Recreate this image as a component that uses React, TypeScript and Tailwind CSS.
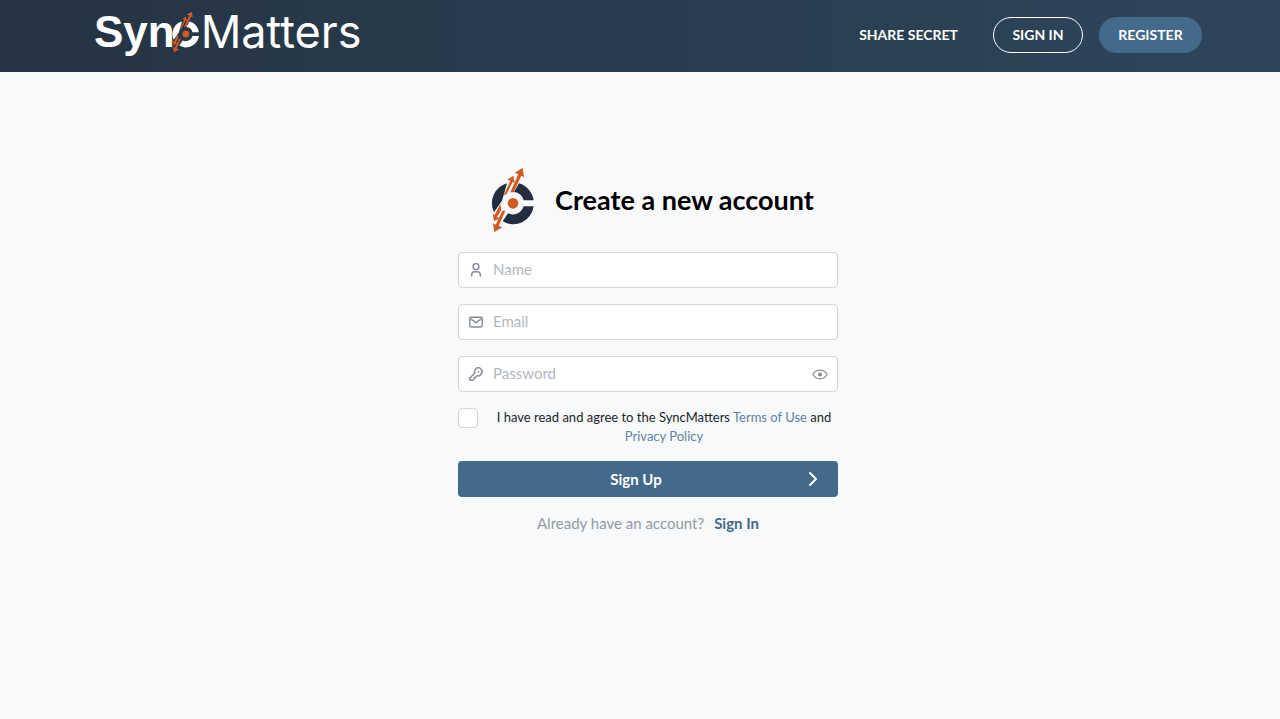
import { useState } from "react"
import type { FormEvent, ReactNode } from "react"

interface MarkProps {
  className: string
  ringColor: string
}

function Mark({ className, ringColor }: MarkProps) {
  return (
    <svg className={className} viewBox="30 21 135 198" aria-hidden="true">
      <g fill={ringColor}>
        <path d="M161 121 A62 62 0 0 0 117 70 L102 96 A34 34 0 0 1 131 121 Z" />
        <path d="M161 139 A62 62 0 0 1 68 184 L84 160 A34 34 0 0 0 131 139 Z" />
        <path d="M81 70 A62 62 0 0 0 42 157 L66 122 Z" />
      </g>
      <circle cx="99" cy="130" r="16" fill="#cf5b22" />
      <g fill="#cf5b22">
        <path d="M128 24 L132 52 L124 47 L101 97 L91 97 L115 42 L104 38 Z" />
        <path d="M100 47 L104 69 L98 66 L80 101 L70 108 L91 62 L82 59 Z" />
        <path d="M43 216 L39 190 L47 194 L67 152 L76 152 L56 198 L67 202 Z" />
        <path d="M42 183 L38 161 L44 165 L61 132 L64 150 L51 171 L60 175 Z" />
      </g>
    </svg>
  )
}

function UserIcon() {
  return (
    <svg className="size-4" viewBox="0 0 16 16" fill="none" stroke="#868f99" strokeWidth="1.5" aria-hidden="true">
      <rect x="5.2" y="1.8" width="5.6" height="5.6" rx="2.2" />
      <path d="M3.7 14.4V12.6a2.8 2.8 0 0 1 2.8-2.8h3a2.8 2.8 0 0 1 2.8 2.8v1.8" />
    </svg>
  )
}

function MailIcon() {
  return (
    <svg className="size-4" viewBox="0 0 16 16" fill="none" stroke="#868f99" strokeWidth="1.5" aria-hidden="true">
      <rect x="1.8" y="3.2" width="12.4" height="9.8" rx="1.4" />
      <path d="M2.6 4.8 8 8.6l5.4-3.8" />
    </svg>
  )
}

function KeyIcon() {
  return (
    <svg className="size-4" viewBox="0 0 16 16" fill="none" stroke="#868f99" strokeWidth="1.5" strokeLinejoin="round" aria-hidden="true">
      <path d="M8 2.7 9.6 1.7H11.5L14.2 4.5V6.5L12 9.7H9L7.5 11.4H6.2V12.8L4.7 14.3H2.2L1.6 13.7V12.2L6.7 7.2V4.7Z" />
      <circle cx="10.4" cy="5.7" r=".9" fill="#868f99" stroke="none" />
    </svg>
  )
}

function EyeIcon() {
  return (
    <svg className="size-4" viewBox="0 0 16 16" fill="none" stroke="#868f99" strokeWidth="1.2" aria-hidden="true">
      <path d="M.8 8.5Q3.5 4.2 8 4.2T15.2 8.5Q12.5 12.8 8 12.8T.8 8.5Z" />
      <circle cx="8" cy="8.5" r="2" fill="#868f99" stroke="none" />
    </svg>
  )
}

interface FieldProps {
  label: string
  type: string
  value: string
  icon: ReactNode
  onChange: (value: string) => void
  children?: ReactNode
}

function Field({ label, type, value, icon, onChange, children }: FieldProps) {
  return (
    <label className="flex h-9 items-center gap-[9px] rounded border border-[#ced4da] bg-white px-[9px]">
      {icon}
      <input
        className="min-w-0 flex-1 bg-transparent pb-px text-[15px] text-slate-900 outline-none placeholder:text-[#b1b8c0]"
        aria-label={label}
        placeholder={label}
        type={type}
        value={value}
        onChange={(event) => onChange(event.target.value)}
      />
      {children}
    </label>
  )
}

function Header() {
  return (
    <header className="h-18 bg-linear-to-r from-[#253443] to-[#2e455a] pl-4">
      <div className="mx-auto flex h-full max-w-[1140px] items-center justify-between px-4">
        <a className="-mt-2 flex items-center text-white" href="#" aria-label="SyncMatters">
          <span className="font-['Liberation_Sans',sans-serif] text-[44px] leading-[52px] font-bold">Syn</span>
          <Mark className="-ml-1 h-[42px] w-[29px]" ringColor="#ffffff" />
          <span className="ml-px font-['Inter',sans-serif] text-[45px] leading-[52px]">Matters</span>
        </a>
        <nav className="-mt-0.5 flex items-center gap-4 text-sm font-bold text-white">
          <a className="mr-[19px]" href="#share">SHARE SECRET</a>
          <a className="flex h-9 w-[90px] items-center justify-center rounded-full border border-white" href="#signin">SIGN IN</a>
          <a className="flex h-9 w-[103px] items-center justify-center rounded-full bg-[#436a8a]" href="#register">REGISTER</a>
        </nav>
      </div>
    </header>
  )
}

export default function App() {
  const [name, setName] = useState("")
  const [email, setEmail] = useState("")
  const [password, setPassword] = useState("")
  const [showPassword, setShowPassword] = useState(false)
  const [agreed, setAgreed] = useState(false)

  function handleSubmit(event: FormEvent<HTMLFormElement>) {
    event.preventDefault()
  }

  return (
    <div className="min-h-screen bg-[#f8f9fb] font-['Lato',sans-serif]">
      <Header />
      <main className="flex justify-center pt-[95px] pl-4">
        <form className="w-full max-w-[380px]" onSubmit={handleSubmit}>
          <div className="mb-[19px] flex items-center justify-center gap-5 pl-2">
            <Mark className="h-[66px] w-[45px]" ringColor="#232d3f" />
            <h1 className="text-[27px] leading-9 font-bold text-black">Create a new account</h1>
          </div>

          <div className="grid gap-4">
            <Field label="Name" type="text" value={name} icon={<UserIcon />} onChange={setName} />
            <Field label="Email" type="email" value={email} icon={<MailIcon />} onChange={setEmail} />
            <Field label="Password" type={showPassword ? "text" : "password"} value={password} icon={<KeyIcon />} onChange={setPassword}>
              <button type="button" aria-label="Show password" onClick={() => setShowPassword(!showPassword)}>
                <EyeIcon />
              </button>
            </Field>
          </div>

          <div className="mt-4 flex items-start gap-3">
            <input
              id="terms"
              className="size-5 shrink-0 appearance-none rounded border border-[#ced4da] bg-white checked:bg-[#436a8a]"
              type="checkbox"
              checked={agreed}
              onChange={(event) => setAgreed(event.target.checked)}
            />
            <label className="flex-1 text-center text-[13px] leading-[19px] text-[#212529]" htmlFor="terms">
              I have read and agree to the SyncMatters <a className="text-[#5f83a1]" href="#terms-of-use">Terms of Use</a> and{" "}
              <br />
              <a className="text-[#5f83a1]" href="#privacy">Privacy Policy</a>
            </label>
          </div>

          <button className="mt-[15px] flex h-9 w-full items-center rounded bg-[#436a8a] pr-4 text-[15px] font-bold text-white" type="submit">
            <span className="flex-1 pl-2.5">Sign Up</span>
            <svg className="h-4 w-[18px]" viewBox="0 0 18 16" fill="none" stroke="currentColor" strokeWidth="2" strokeLinecap="round" strokeLinejoin="round" aria-hidden="true">
              <path d="m6 2 6 6-6 6" />
            </svg>
          </button>

          <p className="mt-4 flex justify-center gap-2.5 text-[15px] leading-5 text-[#929ba4]">
            Already have an account?
            <a className="font-bold text-[#436a8a]" href="#signin">Sign In</a>
          </p>
        </form>
      </main>
    </div>
  )
}
